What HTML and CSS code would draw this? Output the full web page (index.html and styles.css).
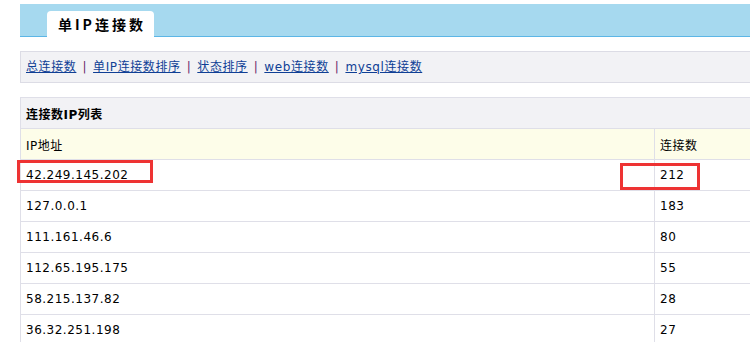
FILE: index.html
```html
<!DOCTYPE html>
<html>
<head>
    <meta charset="utf-8">
    <link rel="stylesheet" href="styles.css">
</head>
<body>

    <div id="page">

        <div class="tab_bar">
            <div class="tab">单IP连接数</div>
        </div>

        <div class="nav">
            <a href="#">总连接数</a><span class="sep">|</span><a href="#">单IP连接数排序</a><span class="sep">|</span><a href="#">状态排序</a><span class="sep">|</span><a href="#">web连接数</a><span class="sep">|</span><a href="#">mysql连接数</a>
        </div>

        <table class="list">
            <tr class="title_row">
                <td colspan="2">连接数IP列表</td>
            </tr>
            <tr class="head_row">
                <td class="ip_col">IP地址</td>
                <td>连接数</td>
            </tr>
            <tr><td>42.249.145.202</td><td>212</td></tr>
            <tr><td>127.0.0.1</td><td>183</td></tr>
            <tr><td>111.161.46.6</td><td>80</td></tr>
            <tr><td>112.65.195.175</td><td>55</td></tr>
            <tr><td>58.215.137.82</td><td>28</td></tr>
            <tr><td>36.32.251.198</td><td>27</td></tr>
        </table>

        <!-- annotation boxes drawn over the table -->
        <div class="mark" id="mark_ip"></div>
        <div class="mark" id="mark_count"></div>

    </div>

</body>
</html>
```

FILE: styles.css
```css
/*Page.*/
body {
    margin: 0;
    overflow: hidden;
    background-color: #ffffff;
    font-family: "DejaVu Sans", "Noto Sans CJK SC", sans-serif;
    font-size: 12px;
    color: #000000;
}

#page {
    position: relative;
    padding: 4px 0 0 20px;
    width: 1000px;
}

/*Blue tab bar.*/
.tab_bar {
    height: 32px;
    background-color: #a6d9ef;
    border-bottom: 1px #5cb6e6 solid;
    display: flex;
    align-items: flex-end;
    padding-left: 27px;
}

.tab {
    height: 26px;
    line-height: 26px;
    margin-bottom: -1px;
    padding: 0 8px 0 11px;
    background-color: #ffffff;
    border-radius: 4px 4px 0 0;
    font-family: "Noto Sans CJK SC", sans-serif;
    font-weight: bold;
    font-size: 14px;
    letter-spacing: 3px;
}

/*Link strip.*/
.nav {
    margin-top: 14px;
    height: 30px;
    line-height: 30px;
    background-color: #f2f2f5;
    border: 1px #dcdce5 solid;
    border-right: none;
    padding-left: 5px;
    letter-spacing: 0.6px;
}

.nav a {
    color: #0f3f95;
    text-decoration: underline;
}

.sep {
    color: #6a2a6a;
    margin: 0 6px 0 6px;
}

/*IP list.*/
.list {
    margin-top: 14px;
    width: 980px;
    border-collapse: collapse;
    letter-spacing: 0.5px;
}

.list td {
    height: 30px;
    padding: 0 0 0 5px;
    border: 1px #dfdfe8 solid;
    border-right: none;
    vertical-align: middle;
}

.list .ip_col {
    width: 628px;
}

.title_row td {
    background-color: #f2f2f5;
    font-weight: bold;
}

.head_row td {
    background-color: #fdfde9;
}

/*Red marks.*/
.mark {
    position: absolute;
    border: 3px #ee3333 solid;
}

#mark_ip {
    left: 17px;
    top: 160px;
    width: 130px;
    height: 17px;
}

#mark_count {
    left: 620px;
    top: 163px;
    width: 74px;
    height: 21px;
}
```
